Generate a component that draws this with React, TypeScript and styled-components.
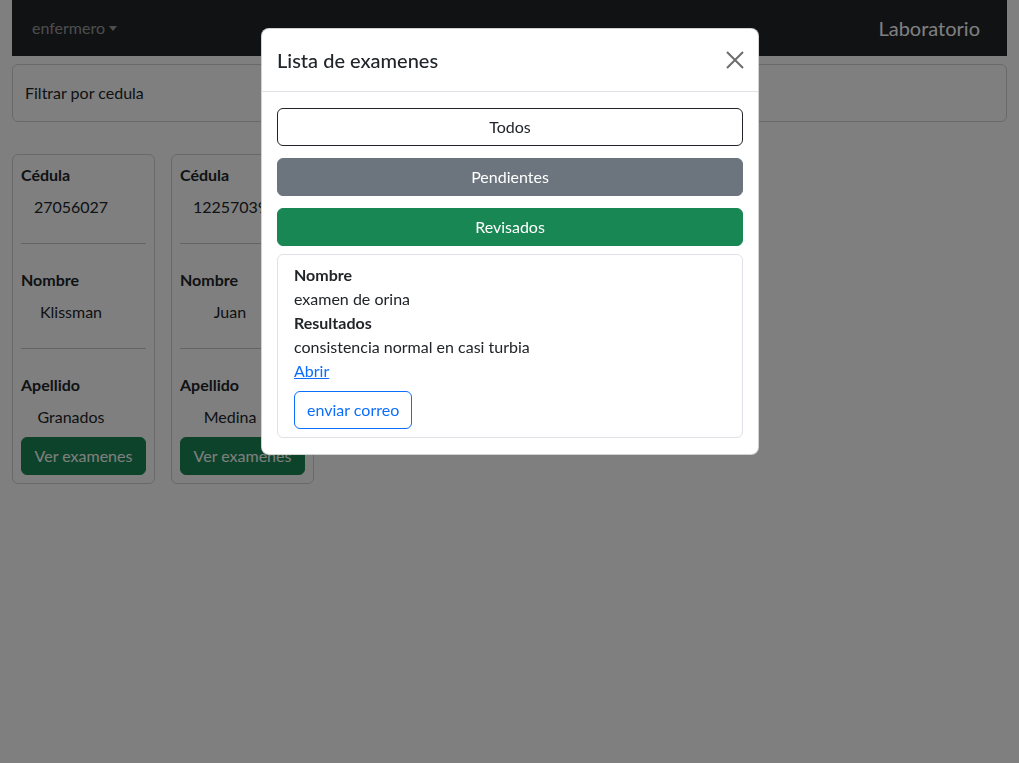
import React from "react";
import styled, { createGlobalStyle } from "styled-components";

const GlobalStyle = createGlobalStyle`
    body {
        margin: 0;
        background: #fff;
        color: #212529;
        font-family: Lato, "Noto Sans", sans-serif;
        font-size: 16px;
        line-height: 1.5;
    }
    * { box-sizing: border-box; }
`

const Page = styled.div`
    padding: 0 12px;
`

const Navbar = styled.nav`
    display: flex;
    justify-content: space-between;
    align-items: center;
    height: 56px;
    padding: 0 27px 0 20px;
    background: #212529;
`

const DropdownToggle = styled.span`
    color: rgba(255, 255, 255, 0.55);
    &::after {
        content: "";
        display: inline-block;
        margin-left: 4px;
        vertical-align: 3px;
        border-top: 5px solid;
        border-left: 4px solid transparent;
        border-right: 4px solid transparent;
    }
`

const Brand = styled.span`
    color: #fff;
    font-size: 20px;
    line-height: 30px;
`

const FilterBox = styled.div`
    margin-top: 8px;
    padding: 16px 12px;
    border: 1px solid rgba(0, 0, 0, 0.175);
    border-radius: 6px;
`

const CardRow = styled.div`
    display: flex;
    gap: 16px;
    margin-top: 32px;
`

const PatientCard = styled.div`
    width: 143px;
    padding: 8px;
    border: 1px solid rgba(0, 0, 0, 0.175);
    border-radius: 6px;
`

const Label = styled.div`
    font-weight: 700;
    margin-bottom: 8px;
`

const Value = styled.div<{ last?: boolean }>`
    width: 100px;
    text-align: center;
    margin-bottom: ${(p) => (p.last ? "8px" : "24px")};
`

const Divider = styled.hr`
    margin: 0 0 24px;
    border: 0;
    border-top: 1px solid rgba(33, 37, 41, 0.25);
`

const Button = styled.button<{ variant: "dark" | "secondary" | "success" | "primary" }>`
    display: block;
    font-family: inherit;
    font-size: 16px;
    line-height: 24px;
    padding: 6px 12px;
    border-radius: 6px;
    white-space: nowrap;
    cursor: pointer;
    border: 1px solid;
    ${(p) =>
        p.variant === "dark"
            ? "background: #fff; color: #212529; border-color: #212529;"
            : p.variant === "secondary"
            ? "background: #6c757d; color: #fff; border-color: #6c757d;"
            : p.variant === "success"
            ? "background: #198754; color: #fff; border-color: #198754;"
            : "background: #fff; color: #0d6efd; border-color: #0d6efd;"}
`

const WideButton = styled(Button)`
    width: 100%;
`

const Backdrop = styled.div`
    position: fixed;
    inset: 0;
    background: rgba(0, 0, 0, 0.5);
`

const ModalDialog = styled.div`
    position: fixed;
    top: 28px;
    left: 261px;
    width: 498px;
    background: #fff;
    border: 1px solid rgba(0, 0, 0, 0.175);
    border-radius: 8px;
`

const ModalHeader = styled.div`
    display: flex;
    justify-content: space-between;
    align-items: center;
    padding: 16px 14px 16px 15px;
    border-bottom: 1px solid #dee2e6;
`

const ModalTitle = styled.h5`
    margin: 0;
    font-size: 20px;
    font-weight: 500;
    line-height: 30px;
`

const CloseButton = styled.button`
    display: flex;
    padding: 0;
    background: none;
    border: 0;
    cursor: pointer;
`

const ModalBody = styled.div`
    display: flex;
    flex-direction: column;
    gap: 12px;
    padding: 16px 15px;
`

const ExamCard = styled.div`
    margin-top: -4px;
    padding: 8px 16px;
    border: 1px solid #dee2e6;
    border-radius: 6px;
`

const Bold = styled.div`
    font-weight: 700;
`

const Link = styled.a`
    display: block;
    color: #0d6efd;
    text-decoration: underline;
    margin-bottom: 8px;
    width: fit-content;
`

const patients = [
    { cedula: "27056027", nombre: "Klissman", apellido: "Granados" },
    { cedula: "12257039", nombre: "Juan", apellido: "Medina" },
];

const App = () => {
    return (
        <>
            <GlobalStyle />
            <Page>
                <Navbar>
                    <DropdownToggle>enfermero</DropdownToggle>
                    <Brand>Laboratorio</Brand>
                </Navbar>
                <FilterBox>Filtrar por cedula</FilterBox>
                <CardRow>
                    {patients.map((p) => (
                        <PatientCard key={p.cedula}>
                            <Label>Cédula</Label>
                            <Value>{p.cedula}</Value>
                            <Divider />
                            <Label>Nombre</Label>
                            <Value>{p.nombre}</Value>
                            <Divider />
                            <Label>Apellido</Label>
                            <Value last>{p.apellido}</Value>
                            <WideButton variant="success">Ver examenes</WideButton>
                        </PatientCard>
                    ))}
                </CardRow>
            </Page>
            <Backdrop />
            <ModalDialog>
                <ModalHeader>
                    <ModalTitle>Lista de examenes</ModalTitle>
                    <CloseButton aria-label="Cerrar">
                        <svg width="18" height="18" viewBox="0 0 18 18">
                            <path d="M1 1L17 17M17 1L1 17" stroke="#6c6c6c" strokeWidth="2" />
                        </svg>
                    </CloseButton>
                </ModalHeader>
                <ModalBody>
                    <WideButton variant="dark">Todos</WideButton>
                    <WideButton variant="secondary">Pendientes</WideButton>
                    <WideButton variant="success">Revisados</WideButton>
                    <ExamCard>
                        <Bold>Nombre</Bold>
                        <div>examen de orina</div>
                        <Bold>Resultados</Bold>
                        <div>consistencia normal en casi turbia</div>
                        <Link href="#">Abrir</Link>
                        <Button variant="primary">enviar correo</Button>
                    </ExamCard>
                </ModalBody>
            </ModalDialog>
        </>
    );
};
export default App;
